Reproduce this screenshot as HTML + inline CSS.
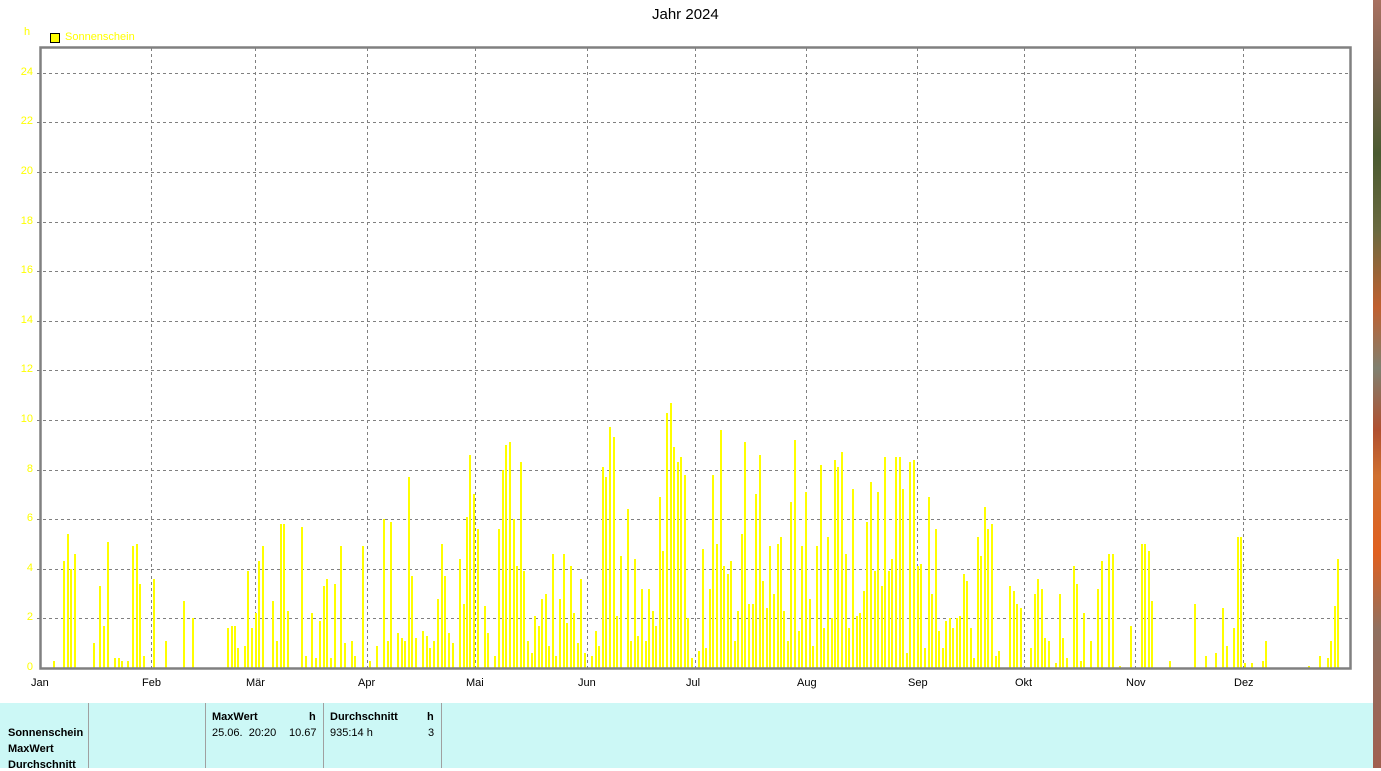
<!DOCTYPE html>
<html><head><meta charset="utf-8"><style>
body{margin:0;width:1381px;height:768px;overflow:hidden;background:#fff;font-family:"Liberation Sans",sans-serif;position:relative}
.a{position:absolute;white-space:nowrap}
.y{color:#ffff00;font-size:11px;right:1348px;text-align:right}
.m{font-size:11px;color:#000;top:677px}
.p{font-size:11px;color:#000}
.b{font-weight:bold}
</style></head><body>
<div class="a" style="left:652px;top:6px;font-size:15px">Jahr 2024</div>
<div class="a" style="left:24px;top:26px;font-size:11px;color:#ff0">h</div>
<div class="a" style="left:50px;top:33px;width:8px;height:8px;background:#ff0;border:1px solid #000"></div>
<div class="a" style="left:65px;top:31px;font-size:11px;color:#ff0">Sonnenschein</div>
<svg class="a" style="left:0;top:0" width="1381" height="700" id="s">
<g stroke="#808080" stroke-dasharray="3,3" stroke-width="1" id="g"></g>
<g fill="#ffff00" id="bars"></g>
<rect x="40.5" y="47.5" width="1310" height="621" fill="none" stroke="#808080" stroke-width="2.5"/>
</svg>
<div id="lbl"></div>
<div class="a" style="left:1373px;top:0;width:8px;height:768px;background:linear-gradient(#a87060 0%,#7a6250 10%,#4a5a30 20%,#6a6a40 30%,#c06030 40%,#808070 48%,#b05030 56%,#d07030 62%,#e06020 72%,#907060 82%,#a06050 100%)"></div>
<div class="a" style="left:0;top:703px;width:1373px;height:65px;background:#ccf8f6"></div>
<div class="a" style="left:88px;top:703px;width:1px;height:65px;background:#a0a0a0"></div>
<div class="a" style="left:205px;top:703px;width:1px;height:65px;background:#a0a0a0"></div>
<div class="a" style="left:323px;top:703px;width:1px;height:65px;background:#a0a0a0"></div>
<div class="a" style="left:441px;top:703px;width:1px;height:65px;background:#a0a0a0"></div>
<div class="a p b" style="left:8px;top:727px">Sonnenschein</div>
<div class="a p b" style="left:8px;top:743px">MaxWert</div>
<div class="a p b" style="left:8px;top:759px">Durchschnitt</div>
<div class="a p b" style="left:212px;top:711px">MaxWert</div>
<div class="a p b" style="left:309px;top:711px">h</div>
<div class="a p" style="left:212px;top:727px">25.06.&nbsp; 20:20</div>
<div class="a p" style="left:289px;top:727px">10.67</div>
<div class="a p b" style="left:330px;top:711px">Durchschnitt</div>
<div class="a p b" style="left:427px;top:711px">h</div>
<div class="a p" style="left:330px;top:727px">935:14 h</div>
<div class="a p" style="left:428px;top:727px">3</div>
<script>
var g=document.getElementById('g'),bs=document.getElementById('bars'),L=document.getElementById('lbl'),h='',ns='http://www.w3.org/2000/svg';
function ln(x1,y1,x2,y2){var l=document.createElementNS(ns,'line');l.setAttribute('x1',x1);l.setAttribute('y1',y1);l.setAttribute('x2',x2);l.setAttribute('y2',y2);g.appendChild(l);}
for(var i=1;i<=12;i++){var y=Math.round(668-i*49.6)+.5;ln(37,y,1350,y);}
for(var i=0;i<=12;i++){var y=Math.round(668-i*49.6);h+='<div class="a y" style="top:'+(y-7)+'px">'+(i*2)+'</div>';}
var mx=[40,151,255,367,475,587,695,806,917,1024,1135,1243],mn=['Jan','Feb','Mär','Apr','Mai','Jun','Jul','Aug','Sep','Okt','Nov','Dez'];
for(var i=0;i<12;i++){if(i>0)ln(mx[i]+.5,48,mx[i]+.5,672);h+='<div class="a m" style="left:'+(mx[i]-9)+'px">'+mn[i]+'</div>';}
L.innerHTML=h;
var d=[54,.3,64,4.3,68,5.4,71,4,75,4.6,94,1,100,3.3,104,1.7,108,5.1,115,.4,119,.4,122,.3,128,.3,133,4.9,137,5,140,3.4,144,.5,154,3.6,166,1.1,184,2.7,193,2,228,1.6,232,1.7,235,1.7,238,.8,245,.9,248,3.9,252,1.6,256,2.2,259,4.3,263,4.9,273,2.7,277,1.1,281,5.8,284,5.8,288,2.3,302,5.7,306,.5,312,2.2,316,.4,320,1.9,324,3.3,327,3.6,331,.4,335,3.4,341,4.9,345,1,352,1.1,355,.5,363,4.9,370,.3,377,.9,384,6,388,1.1,391,5.9,398,1.4,402,1.2,405,1.1,409,7.7,412,3.7,416,1.2,423,1.5,427,1.3,430,.8,434,1.1,438,2.8,442,5,445,3.7,449,1.4,453,1,460,4.4,464,2.6,467,6.1,470,8.6,474,7,478,5.6,485,2.5,488,1.4,495,.5,499,5.6,503,8,506,9,510,9.1,514,6,517,4.1,521,8.3,524,3.9,528,1.1,532,.6,535,2.1,539,1.7,542,2.8,546,3,549,.9,553,4.6,556,.5,560,2.8,564,4.6,567,1.8,571,4.1,574,2.2,578,1,581,3.6,585,.6,592,.5,596,1.5,599,.9,603,8.1,606,7.7,610,9.7,614,9.3,617,2.1,621,4.5,628,6.4,631,1.1,635,4.4,638,1.3,642,3.2,646,1.1,649,3.2,653,2.3,656,1.7,660,6.9,663,4.7,667,10.3,671,10.7,674,8.9,678,8.3,681,8.5,685,7.8,688,2,692,.4,699,.7,703,4.8,706,.8,710,3.2,713,7.8,717,5,721,9.6,724,4.1,728,3.8,731,4.3,735,1.1,738,2.3,742,5.4,745,9.1,749,2.6,753,2.6,756,7,760,8.6,763,3.5,767,2.4,770,4.9,774,3,778,5,781,5.3,784,2.3,788,1.1,791,6.7,795,9.2,799,1.5,802,4.9,806,7.1,810,2.8,813,.9,817,4.9,821,8.2,824,1.6,828,5.3,832,2,835,8.4,838,8.1,842,8.7,846,4.6,849,1.6,853,7.2,857,2.1,860,2.2,864,3.1,867,5.9,871,7.5,875,3.9,878,7.1,882,3.3,885,8.5,889,3.9,892,4.4,896,8.5,900,8.5,903,7.2,907,.6,910,8.3,914,8.4,918,4.1,921,4.2,925,.8,929,6.9,932,3,936,5.6,939,1.5,943,.8,946,1.9,950,2,953,1.6,957,2,960,2.1,964,3.8,967,3.5,971,1.6,974,.4,978,5.3,981,4.5,985,6.5,988,5.6,992,5.8,996,.5,999,.7,1010,3.3,1014,3.1,1017,2.6,1021,2.4,1031,.8,1035,3,1038,3.6,1042,3.2,1045,1.2,1049,1.1,1056,.2,1060,3,1063,1.2,1067,.4,1074,4.1,1077,3.4,1081,.3,1084,2.2,1091,1.1,1098,3.2,1102,4.3,1109,4.6,1113,4.6,1120,.1,1131,1.7,1142,5,1145,5,1149,4.7,1152,2.7,1170,.3,1195,2.6,1206,.5,1216,.6,1223,2.4,1227,.9,1234,1.6,1238,5.3,1241,5.3,1245,.2,1252,.2,1263,.3,1266,1.1,1309,.1,1320,.5,1328,.4,1331,1.1,1335,2.5,1338,4.4];
for(var i=0;i<d.length;i+=2){var hh=Math.max(1,Math.round(d[i+1]*24.8));var r=document.createElementNS(ns,'rect');r.setAttribute('x',d[i]-1);r.setAttribute('y',668-hh);r.setAttribute('width',2);r.setAttribute('height',hh);bs.appendChild(r);}
</script>
</body></html>
